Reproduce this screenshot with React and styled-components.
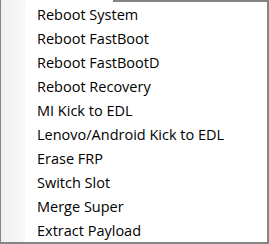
import React from "react";
import styled, { createGlobalStyle } from "styled-components";

const Global = createGlobalStyle`
  html, body { margin: 0; padding: 0; background: #ffffff; }
  body { font-family: "Segoe UI", "Noto Sans", "Open Sans", sans-serif; }
`;

const Menu = styled.div`
  width: 269px;
  height: 244px;
  box-sizing: border-box;
  border-left: 1px solid #848484;
  border-right: 2px solid #848484;
  border-bottom: 2px solid #848484;
  background: #ffffff;
  display: flex;
  flex-direction: column;
`;

const TopEdge = styled.div`
  display: flex;
  height: 2px;
  flex: none;
`;

const TopGap = styled.div`
  width: 112px;
  background: linear-gradient(to right, #f0f0f0, #f7f7f7 24px, #ffffff 25px);
`;

const TopLine = styled.div`
  flex: 1;
  background: #848484;
`;

const Body = styled.div`
  flex: 1;
  display: flex;
  background: linear-gradient(to right, #efefef 0px, #f8f8f8 24px, #ffffff 25px);
`;

const List = styled.ul`
  list-style: none;
  margin: 0;
  padding: 0;
  width: 100%;
  display: flex;
  flex-direction: column;
`;

const Item = styled.li`
  height: 24px;
  display: flex;
  align-items: center;
  padding-left: 36px;
  font-family: "Open Sans", "Noto Sans", sans-serif;
  font-size: 14.5px;
  color: #000000;
  white-space: nowrap;
`;

const items = [
  "Reboot System",
  "Reboot FastBoot",
  "Reboot FastBootD",
  "Reboot Recovery",
  "MI Kick to EDL",
  "Lenovo/Android Kick to EDL",
  "Erase FRP",
  "Switch Slot",
  "Merge Super",
  "Extract Payload",
];

export default function App() {
  return (
    <>
      <Global />
      <Menu>
        <TopEdge>
          <TopGap />
          <TopLine />
        </TopEdge>
        <Body>
          <List>
            {items.map((t) => (
              <Item key={t}>{t}</Item>
            ))}
          </List>
        </Body>
      </Menu>
    </>
  );
}
